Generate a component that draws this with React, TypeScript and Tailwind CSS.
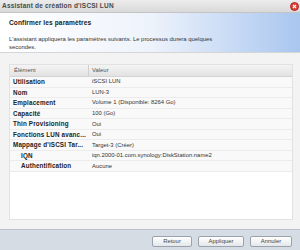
import React from "react";

const rows: { label: string; value: string; indent?: boolean }[] = [
  { label: "Utilisation", value: "iSCSI LUN" },
  { label: "Nom", value: "LUN-3" },
  { label: "Emplacement", value: "Volume 1 (Disponible: 8264 Go)" },
  { label: "Capacité", value: "100 (Go)" },
  { label: "Thin Provisioning", value: "Oui" },
  { label: "Fonctions LUN avanc...", value: "Oui" },
  { label: "Mappage d'iSCSI Tar...", value: "Target-3 (Créer)" },
  { label: "IQN", value: "iqn.2000-01.com.synology:DiskStation.name2", indent: true },
  { label: "Authentification", value: "Aucune", indent: true },
];

export default function App() {
  return (
    <div
      className="w-[300px] h-[250px] flex flex-col overflow-hidden bg-white text-[#333]"
      style={{ fontFamily: '"Liberation Sans", Arial, sans-serif' }}
    >
      {/* Title bar */}
      <div className="h-[13px] shrink-0 flex items-center justify-between pl-[2px] pr-[1px] bg-gradient-to-b from-[#ececec] to-[#d9d9d9] border-b border-[#c4c4c4]">
        <span className="text-[6.5px] font-bold text-[#4a4a4a] leading-none tracking-[0.2px]">
          Assistant de création d'iSCSI LUN
        </span>
        <div className="w-[9px] h-[9px] rounded-full bg-[#d9423a] border border-[#b02a22] flex items-center justify-center">
          <svg width="5" height="5" viewBox="0 0 5 5">
            <path d="M1 1 L4 4 M4 1 L1 4" stroke="white" strokeWidth="1.1" />
          </svg>
        </div>
      </div>

      {/* Header */}
      <div className="h-[40px] shrink-0 bg-gradient-to-r from-white via-[#eef3fb] to-[#a9c6ef] border-b border-[#d6d6d6] pl-[9px] pt-[7px]">
        <div className="text-[6.6px] font-bold text-[#222] leading-none tracking-[0.1px]">Confirmer les paramètres</div>
        <div className="mt-[8px] text-[5.9px] leading-[8px] text-[#333]">
          L'assistant appliquera les paramètres suivants. Le processus durera quelques
          <br />
          secondes.
        </div>
      </div>

      {/* Body */}
      <div className="flex-1 bg-[#f3f3f3] bg-[radial-gradient(#e6e6e6_0.5px,transparent_0.6px)] bg-[size:2px_2px] pt-[11px] pl-[9px] pr-[7px] pb-[9px] flex">
        <div className="flex-1 bg-white border border-[#e2e2e2] flex flex-col">
          <div className="h-[12px] flex items-center bg-gradient-to-b from-[#f4f4f4] to-[#e2e2e2] border-b border-[#d4d4d4] text-[5.9px] text-[#555]">
            <div className="w-[79px] pl-[4px] border-r border-[#d0d0d0] h-full flex items-center">Élément</div>
            <div className="pl-[3px]">Valeur</div>
          </div>
          {rows.map((r) => (
            <div
              key={r.label}
              className="h-[10.55px] flex items-center border-b border-[#ececec] text-[5.9px] bg-[#f9f9f9]"
            >
              <div
                className={`w-[79px] shrink-0 whitespace-nowrap font-bold text-[6.3px] tracking-[0.15px] text-[#222] ${
                  r.indent ? "pl-[11px]" : "pl-[3px]"
                }`}
              >
                {r.label}
              </div>
              <div className="pl-[3px] text-[#333] whitespace-nowrap">{r.value}</div>
            </div>
          ))}
        </div>
      </div>

      {/* Footer */}
      <div className="h-[21px] shrink-0 bg-[#d6dce3] border-t border-[#b9c1ca] flex items-start justify-end gap-[6px] pt-[6px] pr-[8px]">
        {[
          ["Retour", "w-[40px]"],
          ["Appliquer", "w-[46px]"],
          ["Annuler", "w-[42px]"],
        ].map(([t, w]) => (
          <div
            key={t}
            className={`${w} h-[11px] rounded-[2px] border border-[#9aa3ad] bg-gradient-to-b from-white to-[#e4e7ea] flex items-center justify-center text-[5.9px] text-[#444]`}
          >
            {t}
          </div>
        ))}
      </div>
    </div>
  );
}
